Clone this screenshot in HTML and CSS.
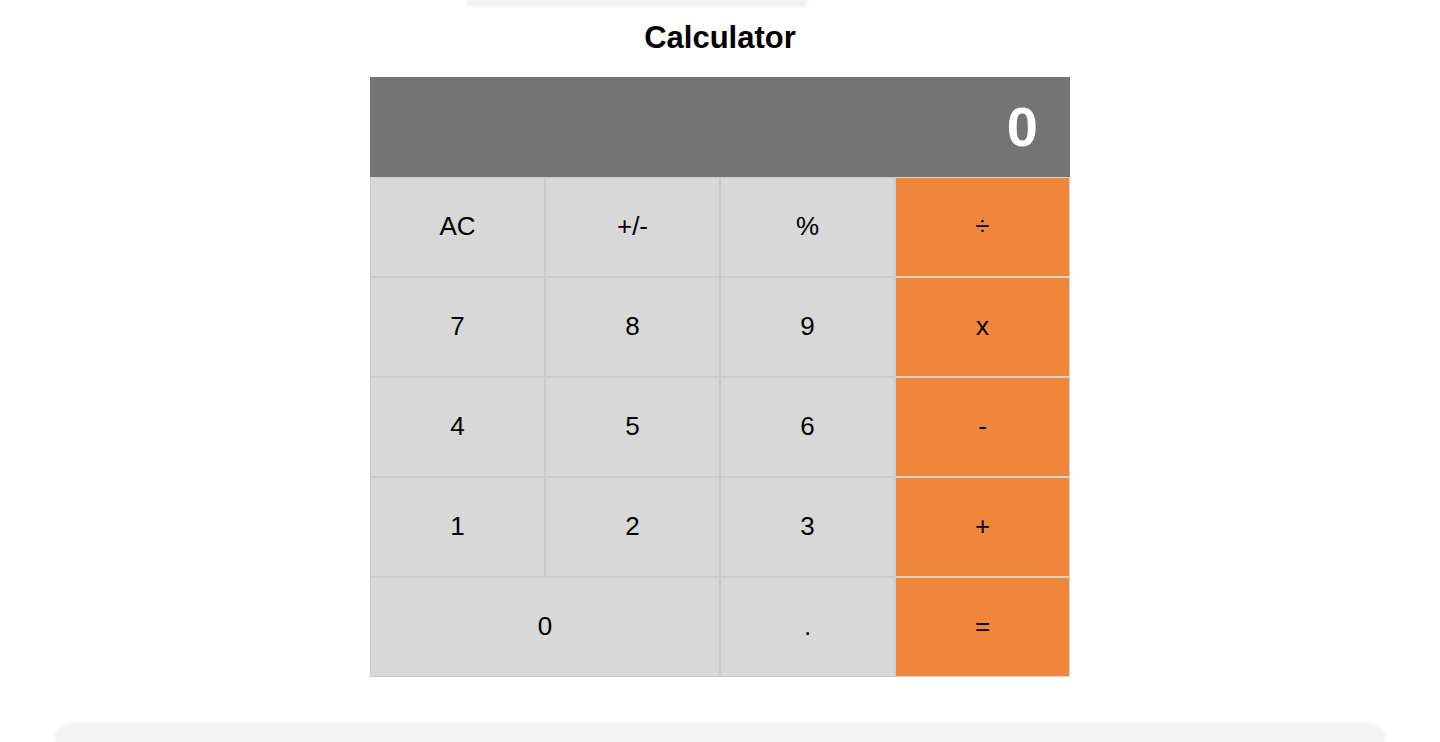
FILE: index.html
```
<!DOCTYPE html>
<html lang="en">
<head>
<meta charset="utf-8">
<title>Calculator</title>
<link rel="stylesheet" href="styles.css">
</head>
<body>
<div class="top-card"></div>
<h1 class="title">Calculator</h1>
<div class="calc">
  <div class="display">0</div>
  <div class="keys">
    <button class="key">AC</button>
    <button class="key">+/-</button>
    <button class="key">%</button>
    <button class="key op">÷</button>
    <button class="key">7</button>
    <button class="key">8</button>
    <button class="key">9</button>
    <button class="key op">x</button>
    <button class="key">4</button>
    <button class="key">5</button>
    <button class="key">6</button>
    <button class="key op">-</button>
    <button class="key">1</button>
    <button class="key">2</button>
    <button class="key">3</button>
    <button class="key op">+</button>
    <button class="key wide">0</button>
    <button class="key">.</button>
    <button class="key op">=</button>
  </div>
</div>
<div class="bottom-card"></div>
</body>
</html>
```
FILE: styles.css
```
html, body {
  margin: 0;
  padding: 0;
  background: #ffffff;
  font-family: "Liberation Sans", Arial, sans-serif;
  overflow: hidden;
}

.top-card {
  width: 340px;
  height: 2px;
  margin: 0 0 0 calc(50% - 253px);
  background: #f2f2f2;
  border-radius: 0 0 14px 14px;
  box-shadow: 0 2px 5px rgba(0, 0, 0, 0.22);
}

.title {
  margin: 18px 0 21px;
  font-size: 31px;
  line-height: 36px;
  font-weight: 700;
  text-align: center;
  color: #000;
}

.calc {
  width: 700px;
  margin: 0 auto;
}

.display {
  height: 100px;
  background: #747474;
  color: #ffffff;
  font-size: 56px;
  font-weight: 700;
  line-height: 100px;
  text-align: right;
  padding-right: 32px;
  box-sizing: border-box;
}

.keys {
  display: grid;
  grid-template-columns: repeat(4, 175px);
  grid-auto-rows: 100px;
}

.key {
  margin: 0;
  padding: 0 0 2px;
  border: 1px solid #cecaca;
  background: #d8d8d8;
  color: #000;
  font-family: "Liberation Sans", Arial, sans-serif;
  font-size: 26px;
  display: flex;
  align-items: center;
  justify-content: center;
  box-sizing: border-box;
}

.key.op {
  background: #f0863a;
  border-color: #d8d2ce;
}

.key.wide {
  grid-column: span 2;
}

.bottom-card {
  width: 1330px;
  height: 17px;
  margin: 48px auto 0;
  background: #f4f4f4;
  border-radius: 18px 18px 0 0;
  box-shadow: 0 -1px 6px rgba(0, 0, 0, 0.08);
}
```
